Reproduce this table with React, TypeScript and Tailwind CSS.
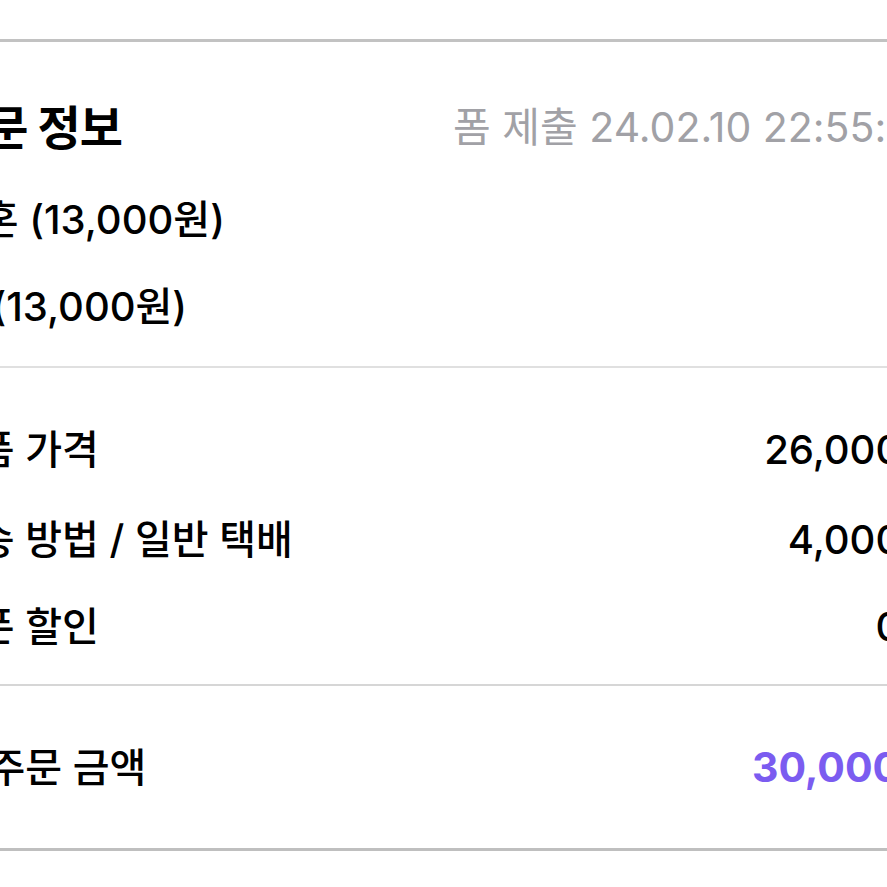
const font = { fontFamily: 'Inter, "Noto Sans CJK KR", sans-serif' }

const priceRows = [
  { label: "상품 가격", value: "26,000원", h: "h-[90px]" },
  { label: "배송 방법 / 일반 택배", value: "4,000원", h: "h-[90px]" },
  { label: "쿠폰 할인", value: "0원", h: "h-[84px]" },
]

export default function App() {
  return (
    <div className="w-[887px] h-[887px] overflow-hidden bg-white text-black" style={font}>
      <div className="ml-[-59px] w-[997px] pt-[39px]">
        {/* order info */}
        <section className="border-t-[3px] border-[#c2c2c2] pt-[40px] pb-[18px]">
          <div className="flex h-[92px] items-center justify-between">
            <h2 className="ml-[2px] text-[47px] font-bold tracking-[-1px]">주문 정보</h2>
            <span className="text-[41px] text-[#a1a1a6]">폼 제출 24.02.10 22:55:00</span>
          </div>
          <div className="ml-[4px] flex h-[92px] items-center text-[40px] font-medium">결혼 (13,000원)</div>
          <div className="ml-[3px] flex h-[82px] items-center text-[40px] font-medium">축 (13,000원)</div>
        </section>

        {/* price breakdown */}
        <section className="border-t-2 border-[#e0e0e0] pt-[37px] pb-[15px]">
          {priceRows.map((row) => (
            <div key={row.label} className={`flex items-center justify-between text-[40px] font-medium ${row.h}`}>
              <span>{row.label}</span>
              <span>{row.value}</span>
            </div>
          ))}
        </section>

        {/* total */}
        <section className="border-t-2 border-[#d6d6d6] pt-[37px] pb-[35px]">
          <div className="flex h-[90px] items-center justify-between">
            <span className="text-[40px] font-medium">총 주문 금액</span>
            <span className="text-[41px] font-bold text-[#7b5cf0]">30,000원</span>
          </div>
        </section>
        <div className="border-t-[3px] border-[#bfbfbf]" />
      </div>
    </div>
  )
}
